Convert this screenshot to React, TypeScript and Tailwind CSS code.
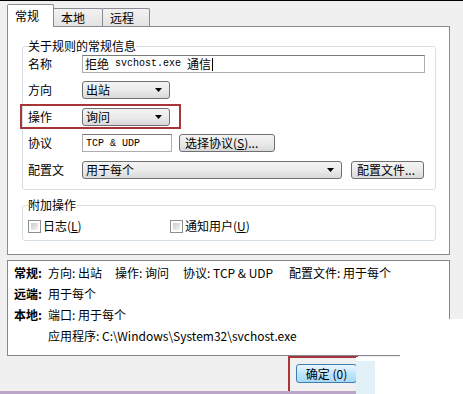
import React from "react";

function Arrow() {
  return (
    <svg width="7" height="4" viewBox="0 0 7 4" className="shrink-0">
      <path d="M0 0 L7 0 L3.5 4 Z" fill="#000" />
    </svg>
  );
}

function Select({ className, text }: { className: string; text: string }) {
  return (
    <div
      className={
        "flex items-center justify-between h-[18px] border border-[#707070] rounded-[3px] bg-linear-to-b from-[#f4f4f4] via-[#ebebeb] to-[#d9d9d9] pl-[3px] pr-[7px] text-[12px] leading-[16px] " +
        className
      }
    >
      <span>{text}</span>
      <Arrow />
    </div>
  );
}

function Button({ className, children }: { className: string; children: React.ReactNode }) {
  return (
    <div
      className={
        "flex items-center h-[18px] border border-[#707070] rounded-[3px] bg-linear-to-b from-[#f4f4f4] via-[#ebebeb] to-[#d9d9d9] pl-[5px] text-[12px] leading-[16px] " +
        className
      }
    >
      {children}
    </div>
  );
}

function Checkbox() {
  return (
    <div className="w-[13px] h-[13px] border border-[#8e8f8f] bg-white p-[2px] shrink-0">
      <div className="w-full h-full bg-linear-to-br from-[#c9ccd1] to-[#f3f3f3]" />
    </div>
  );
}

const mono = "font-['Liberation_Mono',monospace] text-[10px]";

export default function App() {
  return (
    <div className="relative w-[463px] h-[394px] overflow-hidden bg-[#f0f0f0] border-t border-black font-['Noto_Sans_CJK_SC',sans-serif] text-black">
      <div className="px-[7px] pt-[3px]">
        {/* tabs */}
        <div className="flex items-end h-[22px] text-[12px] leading-[16px]">
          <div className="relative z-10 w-[47px] h-[23px] -mb-px bg-white border border-b-0 border-[#898c95] rounded-t-[2px] pl-[7px] pt-[3px]">
            常规
          </div>
          <div className="w-[50px] h-[18px] -ml-px bg-linear-to-b from-[#f2f2f2] to-[#e3e3e3] border border-b-0 border-[#898c95] rounded-t-[2px] pl-[7px] pt-[1px]">
            本地
          </div>
          <div className="w-[48px] h-[18px] -ml-px bg-linear-to-b from-[#f2f2f2] to-[#e3e3e3] border border-b-0 border-[#898c95] rounded-t-[2px] pl-[7px] pt-[1px]">
            远程
          </div>
        </div>

        {/* panel */}
        <div className="w-[443px] h-[229px] bg-white border border-[#898c95] pl-[14px] pr-[13px]">
          <fieldset className="mt-[11px] border border-[#d5dfe5] rounded-[3px] px-[5px] pt-[1px] pb-[10px]">
            <legend className="text-[12px] leading-[16px] px-0">关于规则的常规信息</legend>
            <div className="flex items-center h-[18px] text-[12px]">
              <span className="w-[54px] leading-[16px]">名称</span>
              <div className="flex items-center w-[343px] h-[18px] border border-[#abadb3] border-t-[#7a7a7a] bg-white pl-[2px] leading-[16px]">
                <span>拒绝</span>
                <span className={mono}>&nbsp;svchost.exe&nbsp;</span>
                <span>通信</span>
                <span className="w-px h-[13px] bg-black ml-[1px]" />
              </div>
            </div>
            <div className="flex items-center h-[18px] mt-[8px] text-[12px]">
              <span className="w-[54px] leading-[16px]">方向</span>
              <Select className="w-[88px]" text="出站" />
            </div>
            <div className="relative flex items-center h-[18px] mt-[9px] text-[12px]">
              <span className="w-[54px] leading-[16px]">操作</span>
              <Select className="w-[88px]" text="询问" />
              <div className="absolute left-[-8px] top-[-4px] w-[161px] h-[25px] border-2 border-[#a8353a]" />
            </div>
            <div className="flex items-center h-[18px] mt-[8px] text-[12px]">
              <span className="w-[54px] leading-[16px]">协议</span>
              <div className="flex items-center w-[90px] h-[18px] border border-[#abadb3] border-t-[#7a7a7a] bg-white pl-[3px]">
                <span className={mono}>TCP &amp; UDP</span>
              </div>
              <Button className="ml-[7px] w-[96px]">
                选择协议(<u>S</u>)...
              </Button>
            </div>
            <div className="flex items-center h-[18px] mt-[9px] text-[12px]">
              <span className="w-[54px] leading-[16px]">配置文</span>
              <Select className="w-[260px]" text="用于每个" />
              <Button className="ml-[9px] w-[73px]">配置文件...</Button>
            </div>
          </fieldset>

          <fieldset className="mt-[7px] border border-[#d5dfe5] rounded-[3px] px-[5px] pt-[6px] pb-[7px]">
            <legend className="text-[12px] leading-[16px] px-0">附加操作</legend>
            <div className="flex items-center h-[14px] text-[12px] leading-[16px]">
              <div className="flex items-center gap-[2px] w-[142px]">
                <Checkbox />
                <span>
                  日志(<u>L</u>)
                </span>
              </div>
              <div className="flex items-center gap-[2px]">
                <Checkbox />
                <span>
                  通知用户(<u>U</u>)
                </span>
              </div>
            </div>
          </fieldset>
        </div>

        {/* description */}
        <div className="mt-[5px] w-[443px] h-[96px] bg-white border border-[#828790] pl-[6px] pt-[1px] text-[12px] leading-[21px]">
          <div className="flex">
            <span className="w-[34px] font-bold">常规:</span>
            <span className="w-[67px]">方向: 出站</span>
            <span className="w-[68px]">操作: 询问</span>
            <span className="w-[106px]">协议: TCP &amp; UDP</span>
            <span>配置文件: 用于每个</span>
          </div>
          <div className="flex">
            <span className="w-[34px] font-bold">远端:</span>
            <span>用于每个</span>
          </div>
          <div className="flex">
            <span className="w-[34px] font-bold">本地:</span>
            <span>端口: 用于每个</span>
          </div>
          <div className="flex">
            <span className="w-[34px]" />
            <span>应用程序: C:\Windows\System32\svchost.exe</span>
          </div>
        </div>

        {/* bottom buttons */}
        <div className="flex justify-end pr-[99px] pt-[8px]">
          <div className="relative">
            <div className="flex items-center justify-center w-[61px] h-[19px] border border-[#3c7fb1] rounded-[3px] bg-linear-to-b from-[#eaf6fd] via-[#bee6fd] to-[#a7d9f5] text-[12px] leading-[16px]">
              确定 (0)
            </div>
            <div className="absolute left-[-8px] top-[-8px] w-[70px] h-[60px] border-2 border-[#a8353a]" />
          </div>
        </div>
      </div>

      {/* image artifacts at bottom-right / bottom edge */}
      <div className="absolute left-0 bottom-0 w-[356px] h-[3px] bg-[#b9a6c8]" />
      <div className="absolute right-0 top-[318px] w-[63px] h-[76px] bg-white" />
      <div className="absolute right-0 top-[356px] w-[107px] h-[38px] bg-white" />
      <div className="absolute left-[356px] top-[360px] w-[19px] h-[34px] bg-[#e2f1f7]" />
    </div>
  );
}
